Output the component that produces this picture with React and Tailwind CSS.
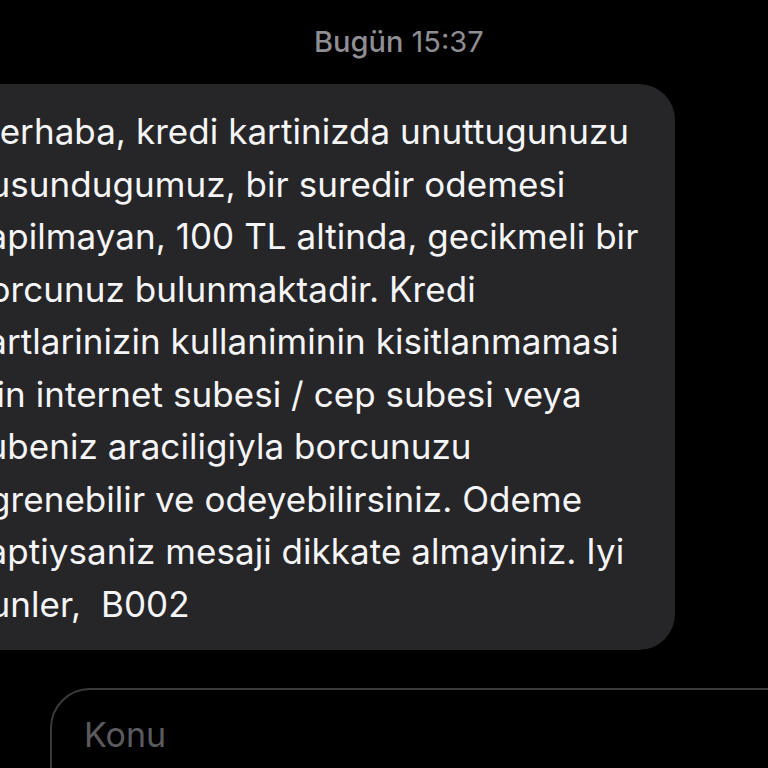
const lines = [
  'Merhaba, kredi kartinizda unuttugunuzu',
  'dusundugumuz, bir suredir odemesi',
  'yapilmayan, 100 TL altinda, gecikmeli bir',
  'borcunuz bulunmaktadir. Kredi',
  'kartlarinizin kullaniminin kisitlanmamasi',
  'için internet subesi / cep subesi veya',
  'subeniz araciligiyla borcunuzu',
  'ogrenebilir ve odeyebilirsiniz. Odeme',
  'yaptiysaniz mesaji dikkate almayiniz. Iyi',
  'gunler,  B002',
];

export default function App() {
  return (
    <div className="w-[768px] h-[768px] bg-black overflow-hidden flex flex-col font-['Inter','Noto_Sans',sans-serif]">
      {/* Timestamp */}
      <div className="shrink-0 pt-[24px] pl-[314px] h-[84px] text-[29px] leading-[36px] text-[#8e8e93] whitespace-nowrap">
        <span className="font-medium">Bugün</span> 15:37
      </div>

      {/* Message bubble */}
      <div className="ml-[-80px] w-[755px] h-[566px] shrink-0 bg-[#262629] rounded-[36px] pt-[21px] pl-[48px] text-[35px] leading-[52.5px] text-[#f5f5f7] tracking-[0.05px]">
        {lines.map((l, i) => (
          <div key={i} className="whitespace-pre">{l}</div>
        ))}
      </div>

      {/* Subject input */}
      <div className="mt-[38px] ml-[50px] w-[800px] h-[120px] shrink-0 border-2 border-[#3a3a3c] rounded-[40px] pl-[32px] pt-[25px] text-[34px] leading-[40px] text-[#5b5b5f]">
        Konu
      </div>
    </div>
  );
}
